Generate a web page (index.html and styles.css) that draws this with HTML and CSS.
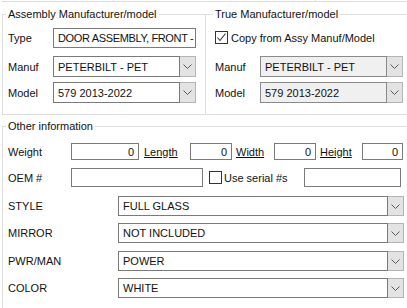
FILE: index.html
```html
<!DOCTYPE html>
<html lang="en">
  <head>
    <meta charset="UTF-8" />
    <title>Part details</title>
    <link rel="stylesheet" href="styles.css">
  </head>
  <body>
    <div class="form">
      <div class="prev-row"><span class="cell cell-a"></span><span class="cell cell-b"></span></div>

      <div class="top">
        <fieldset class="group group-assy">
          <legend>Assembly Manufacturer/model</legend>
          <div class="row row-type">
            <label>Type</label>
            <div class="text tight">DOOR ASSEMBLY, FRONT -</div>
          </div>
          <div class="row row-manuf">
            <label>Manuf</label>
            <div class="combo">
              <span class="combo-value">PETERBILT - PET</span>
              <span class="combo-btn"><svg width="9" height="5" viewBox="0 0 9 5"><path d="M0.5 0.5 L4.5 4.5 L8.5 0.5" fill="none" stroke="#5a5a5a" /></svg></span>
            </div>
          </div>
          <div class="row row-model">
            <label>Model</label>
            <div class="combo">
              <span class="combo-value">579 2013-2022</span>
              <span class="combo-btn"><svg width="9" height="5" viewBox="0 0 9 5"><path d="M0.5 0.5 L4.5 4.5 L8.5 0.5" fill="none" stroke="#5a5a5a" /></svg></span>
            </div>
          </div>
        </fieldset>

        <fieldset class="group group-true">
          <legend>True Manufacturer/model</legend>
          <div class="row row-copy">
            <span class="check checked"><svg width="11" height="11" viewBox="0 0 11 11"><path d="M1.5 5.5 L4 8.5 L9.5 1.5" fill="none" stroke="#333" stroke-width="1.1" /></svg></span>
            <span class="check-label">Copy from Assy Manuf/Model</span>
          </div>
          <div class="row row-manuf">
            <label>Manuf</label>
            <div class="combo disabled">
              <span class="combo-value">PETERBILT - PET</span>
              <span class="combo-btn"><svg width="9" height="5" viewBox="0 0 9 5"><path d="M0.5 0.5 L4.5 4.5 L8.5 0.5" fill="none" stroke="#5a5a5a" /></svg></span>
            </div>
          </div>
          <div class="row row-model">
            <label>Model</label>
            <div class="combo disabled">
              <span class="combo-value">579 2013-2022</span>
              <span class="combo-btn"><svg width="9" height="5" viewBox="0 0 9 5"><path d="M0.5 0.5 L4.5 4.5 L8.5 0.5" fill="none" stroke="#5a5a5a" /></svg></span>
            </div>
          </div>
        </fieldset>
      </div>

      <fieldset class="group group-other">
        <legend>Other information</legend>
        <div class="row row-dims">
          <label>Weight</label>
          <div class="text num w-weight">0</div>
          <a class="dim-link l-length">Length</a>
          <div class="text num w-small">0</div>
          <a class="dim-link l-width">Width</a>
          <div class="text num w-small">0</div>
          <a class="dim-link l-height">Height</a>
          <div class="text num w-last">0</div>
        </div>
        <div class="row row-oem">
          <label>OEM #</label>
          <div class="text w-oem"></div>
          <span class="check"></span>
          <span class="check-label">Use serial #s</span>
          <div class="text w-serial"></div>
        </div>
        <div class="row row-attr first">
          <label>STYLE</label>
          <div class="combo">
            <span class="combo-value">FULL GLASS</span>
            <span class="combo-btn"><svg width="9" height="5" viewBox="0 0 9 5"><path d="M0.5 0.5 L4.5 4.5 L8.5 0.5" fill="none" stroke="#5a5a5a" /></svg></span>
          </div>
        </div>
        <div class="row row-attr">
          <label>MIRROR</label>
          <div class="combo">
            <span class="combo-value">NOT INCLUDED</span>
            <span class="combo-btn"><svg width="9" height="5" viewBox="0 0 9 5"><path d="M0.5 0.5 L4.5 4.5 L8.5 0.5" fill="none" stroke="#5a5a5a" /></svg></span>
          </div>
        </div>
        <div class="row row-attr wide-gap">
          <label>PWR/MAN</label>
          <div class="combo">
            <span class="combo-value">POWER</span>
            <span class="combo-btn"><svg width="9" height="5" viewBox="0 0 9 5"><path d="M0.5 0.5 L4.5 4.5 L8.5 0.5" fill="none" stroke="#5a5a5a" /></svg></span>
          </div>
        </div>
        <div class="row row-attr">
          <label>COLOR</label>
          <div class="combo">
            <span class="combo-value">WHITE</span>
            <span class="combo-btn"><svg width="9" height="5" viewBox="0 0 9 5"><path d="M0.5 0.5 L4.5 4.5 L8.5 0.5" fill="none" stroke="#5a5a5a" /></svg></span>
          </div>
        </div>
      </fieldset>
    </div>
  </body>
</html>
```

FILE: styles.css
```css
* {
  margin: 0;
  padding: 0;
  box-sizing: border-box;
}

html,
body {
  overflow: hidden;
}

body {
  width: 407px;
  height: 308px;
  background: #fff;
  color: #111;
  font-family: Tahoma, "Liberation Sans", sans-serif;
  font-size: 11px;
}

.form {
  width: 420px;
  padding-left: 2px;
}

/* bottom edge of the row above, cut off by the window */
.prev-row {
  display: flex;
  height: 2px;
  border-bottom: 1px solid #dcdcdc;
}

.cell {
  display: block;
  height: 2px;
  border-right: 1px solid #dcdcdc;
}

.cell-a {
  width: 112px;
}

.cell-b {
  width: 202px;
}

.top {
  display: flex;
  margin-top: 5px;
}

.group {
  border: 1px solid #dcdcdc;
  padding: 0 0 0 5px;
  min-width: 0;
}

.group legend {
  margin-left: -2px;
  padding: 0 2px;
  line-height: 14px;
}

.group-assy {
  width: 204px;
  height: 108px;
}

.group-true {
  width: 210px;
  height: 108px;
  margin-left: -1px;
  padding-left: 9px;
}

.group-other {
  margin-top: 4px;
  height: 200px;
}

.row {
  display: flex;
  align-items: center;
}

.row label {
  flex: none;
  width: 45px;
}

.row-type {
  margin-top: 7px;
  height: 20px;
}

.row-manuf {
  margin-top: 8px;
  height: 21px;
}

.row-model {
  margin-top: 5px;
  height: 21px;
}

.row-copy {
  margin-top: 10px;
  height: 13px;
}

.group-true .row-manuf {
  margin-top: 12px;
}

.text {
  height: 100%;
  border: 1px solid #7a7a7a;
  background: #fff;
  padding: 0 4px;
  display: flex;
  align-items: center;
  white-space: nowrap;
  overflow: hidden;
}

.text.tight {
  padding-right: 1px;
  letter-spacing: -0.35px;
}

.row-type .text {
  width: 143px;
}

.text.num {
  justify-content: flex-end;
}

.combo {
  display: flex;
  height: 100%;
  width: 143px;
}

.combo-value {
  flex: 1;
  display: flex;
  align-items: center;
  padding: 0 4px;
  border: 1px solid #7a7a7a;
  background: #fff;
  white-space: nowrap;
}

.combo-btn {
  flex: none;
  width: 16px;
  display: flex;
  align-items: center;
  justify-content: center;
  border: 1px solid #b4b4b4;
  border-left: none;
  background: #e3e3e3;
}

.combo.disabled .combo-value {
  background: #f0f0f0;
  border-color: #8a8a8a;
}

.check {
  flex: none;
  width: 13px;
  height: 13px;
  border: 1px solid #333;
  background: #fff;
  display: flex;
  align-items: center;
  justify-content: center;
}

.check-label {
  margin-left: 3px;
  white-space: nowrap;
}

/* other information */
.row-dims {
  margin-top: 10px;
  height: 17px;
}

.row-dims label,
.row-oem label {
  width: 63px;
}

.w-weight {
  width: 68px;
}

.w-small {
  width: 42px;
}

.w-last {
  width: 41px;
}

.dim-link {
  text-decoration: underline;
  color: #111;
}

.l-length {
  width: 46px;
  margin-left: 5px;
}

.l-width {
  width: 38px;
  margin-left: 4px;
}

.l-height {
  width: 42px;
  margin-left: 4px;
}

.row-oem {
  margin-top: 8px;
  height: 19px;
}

.w-oem {
  width: 132px;
}

.row-oem .check {
  margin-left: 6px;
}

.row-oem .check-label {
  width: 80px;
  margin-left: 2px;
}

.w-serial {
  width: 97px;
}

.row-attr {
  margin-top: 7px;
  height: 20px;
}

.row-attr.first {
  margin-top: 9px;
}

.row-attr.wide-gap {
  margin-top: 8px;
}

.row-attr label {
  width: 110px;
}

.row-attr .combo {
  width: 286px;
}
```
